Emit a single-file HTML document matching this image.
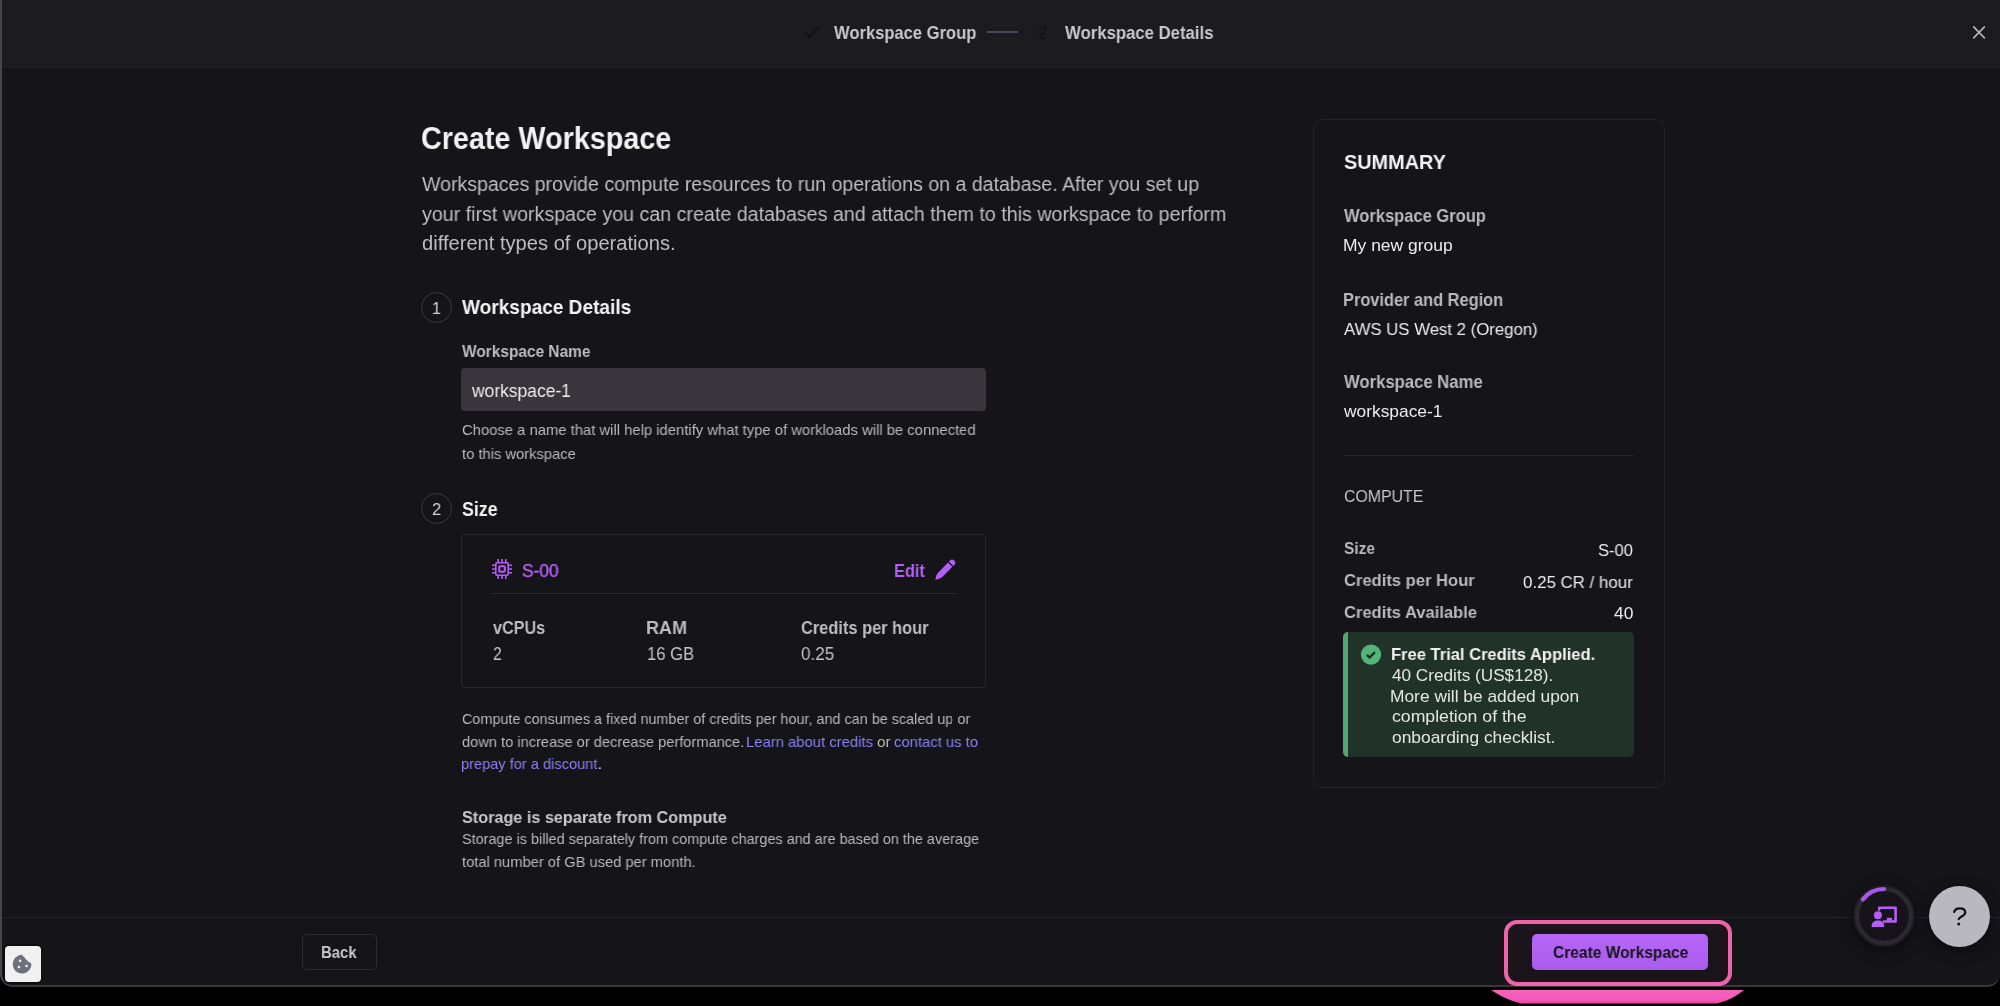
<!DOCTYPE html>
<html><head><meta charset="utf-8">
<style>
*{margin:0;padding:0;box-sizing:border-box;}
html,body{width:2000px;height:1006px;overflow:hidden;background:#000;}
body{font-family:"Liberation Sans",sans-serif;position:relative;}
.a{position:absolute;}
.t{position:absolute;white-space:nowrap;line-height:1;transform-origin:0 0;will-change:transform;}
#frame{position:absolute;left:0;top:0;width:2000px;height:987px;background:#151419;border-left:2px solid #47464b;border-bottom:2px solid #39383d;border-bottom-left-radius:13px;border-bottom-right-radius:13px;overflow:hidden;}
#hdr{position:absolute;left:0;top:0;width:2000px;height:68px;background:#1c1b20;border-bottom:1px solid #222126;}
</style></head>
<body>
<div id="frame">
  <div id="hdr"></div>
</div>

<!-- header icons -->
<svg class="a" style="left:800px;top:22px" width="26" height="20" viewBox="0 0 26 20"><path d="M5 10.5 L9.5 15 L19 5.5" fill="none" stroke="#0f0e12" stroke-width="1.6"/></svg>
<div class="a" style="left:987px;top:31px;width:31px;height:2px;background:#4a4657;"></div>
<svg class="a" style="left:1970px;top:24px" width="18" height="18" viewBox="0 0 18 18"><path d="M3.7 2.9 L14.4 13.8 M14.4 2.9 L3.7 13.8" stroke="#b4b4b6" stroke-width="1.7" stroke-linecap="round"/></svg>

<!-- step circles -->
<div class="a" style="left:420.5px;top:292px;width:31px;height:31px;border:1px solid #3b3a41;border-radius:50%;"></div>
<div class="a" style="left:420.5px;top:493px;width:31px;height:31px;border:1px solid #3b3a41;border-radius:50%;"></div>

<!-- input -->
<div class="a" style="left:461px;top:368px;width:525px;height:43px;background:#38363c;border-radius:4px;"></div>

<!-- size card -->
<div class="a" style="left:461px;top:534px;width:525px;height:154px;border:1px solid #29282e;border-radius:4px;"></div>
<div class="a" style="left:492px;top:593px;width:464px;height:1px;background:#2b2a30;"></div>
<svg class="a" style="left:491px;top:558px" width="22" height="22" viewBox="0 0 22 22">
 <g fill="none" stroke="#b55ef6">
  <rect x="4.8" y="4.8" width="12.4" height="12.4" rx="1.2" stroke-width="1.6"/>
  <rect x="8.2" y="8.2" width="5.6" height="5.6" rx="0.8" stroke-width="2"/>
  <path stroke-width="1.6" d="M7.2 1V4.2 M11 1V4.2 M14.8 1V4.2 M7.2 17.8V21 M11 17.8V21 M14.8 17.8V21 M1 7.2H4.2 M1 11H4.2 M1 14.8H4.2 M17.8 7.2H21 M17.8 11H21 M17.8 14.8H21"/>
 </g>
</svg>
<svg class="a" style="left:934px;top:558px" width="23" height="23" viewBox="0 0 23 23">
 <path d="M16.2 2.2 C17.2 1.2 18.8 1.2 19.8 2.2 L20.6 3 C21.6 4 21.6 5.6 20.6 6.6 L19.3 7.9 L14.9 3.5 Z" fill="#b55ef6"/>
 <path d="M14 4.4 L18.4 8.8 L8.5 18.7 C7.3 19.9 5.4 20.8 3.6 21.2 L1.3 21.7 L1.8 19.4 C2.2 17.6 3.1 15.7 4.3 14.5 Z" fill="#b55ef6"/>
</svg>

<!-- summary card -->
<div class="a" style="left:1313px;top:119px;width:352px;height:669px;border:1px solid #232228;border-radius:9px;"></div>
<div class="a" style="left:1343px;top:455px;width:291px;height:1px;background:#27262b;"></div>
<!-- alert -->
<div class="a" style="left:1343px;top:632px;width:291px;height:125px;background:#213328;border-radius:5px;overflow:hidden;"><div class="a" style="left:0;top:0;width:5px;height:125px;background:#4fa96f;"></div></div>
<svg class="a" style="left:1360px;top:644px" width="22" height="22" viewBox="0 0 22 22"><circle cx="11" cy="10.6" r="10.2" fill="#55b27a"/><path d="M6.9 10.9 L9.6 13.5 L15 8.1" fill="none" stroke="#1d2c22" stroke-width="2.2"/></svg>

<!-- footer -->
<div class="a" style="left:2px;top:917px;width:1998px;height:1px;background:#25242a;"></div>
<div class="a" style="left:302px;top:934px;width:75px;height:36px;border:1px solid #2d2c32;border-radius:5px;"></div>
<!-- highlight -->
<div class="a" style="left:1504px;top:920px;width:228px;height:66px;border:4px solid #ef63ab;border-radius:13px;background:#1b151b;"></div>
<div class="a" style="left:1532px;top:934px;width:176px;height:36px;border-radius:5px;background:linear-gradient(#b566f7,#a95ded);"></div>

<!-- floating buttons -->
<div class="a" style="left:1853px;top:885px;width:62px;height:62px;border-radius:50%;box-shadow:0 4px 14px rgba(0,0,0,0.5);"></div>
<svg class="a" style="left:1853px;top:885px" width="62" height="62" viewBox="0 0 62 62">
 <circle cx="31" cy="31" r="30.2" fill="#16141a" stroke="#221f27" stroke-width="1"/>
 <circle cx="31" cy="31" r="27" fill="none" stroke="#2b2a30" stroke-width="4.4"/>
 <path d="M31 4 A27 27 0 0 0 9.8 14.4" fill="none" stroke="#aa57eb" stroke-width="4.2" stroke-linecap="round"/>
 <path d="M26.2 24.6 V22.7 H42.6 V36.5 H30.8" fill="none" stroke="#b55ef6" stroke-width="2.6" stroke-linejoin="round" stroke-linecap="round"/>
 <g fill="#b55ef6">
  <circle cx="24.9" cy="30.3" r="4"/>
  <path d="M18.7 42.1 V40.6 C18.7 37.4 21.2 35.4 24.95 35.4 C28.7 35.4 31.2 37.4 31.2 40.6 V42.1 Z"/>
  <rect x="33.9" y="32.8" width="5.1" height="3"/>
 </g>
</svg>
<div class="a" style="left:1929px;top:886px;width:61px;height:61px;border-radius:50%;background:#b9b7bf;box-shadow:0 4px 14px rgba(0,0,0,0.5);"></div>
<svg class="a" style="left:1950px;top:906px" width="20" height="22" viewBox="0 0 20 22"><path d="M4.2 5.8 C5 3.2 7.1 2.3 9.8 2.3 C13 2.3 15.2 3.9 15.2 6.4 C15.2 8.6 13.1 9.6 11.2 10.8 C9.6 11.8 8.7 12.3 8.7 13.2" fill="none" stroke="#121116" stroke-width="2.3" stroke-linecap="round"/><circle cx="8.75" cy="18" r="1.5" fill="#121116"/></svg>

<!-- cookie -->
<div class="a" style="left:3px;top:944px;width:39px;height:40px;border-radius:6px;background:#0e0d11;"></div>
<div class="a" style="left:5px;top:946px;width:36px;height:36px;border-radius:4px;background:#f1f1f2;"></div>
<svg class="a" style="left:11px;top:953px" width="22" height="22" viewBox="0 0 22 22">
 <path d="M11.3 1.7 C11.8 2.8 12.4 3.8 13.4 4 C14 5.6 14.8 6.6 16 6.9 C16.6 8.2 17.6 9.2 19.3 9.6 C20.4 10.2 20.6 11.5 20.2 13.2 C19 17.6 15.3 20.6 11 20.6 C6 20.6 1.8 16.6 1.8 11.3 C1.8 6 6 1.7 11.3 1.7 Z" fill="#706f7c"/>
 <g fill="#f1f1f2"><circle cx="9.1" cy="7.9" r="1.3"/><circle cx="7.9" cy="14" r="1.3"/><circle cx="15.5" cy="13" r="1.3"/></g>
</svg>

<!-- pink reflection -->
<svg class="a" style="left:1485px;top:986px" width="270" height="20" viewBox="0 0 270 20">
 <defs><linearGradient id="pg" x1="0" y1="0" x2="0" y2="1"><stop offset="0" stop-color="#f862b6"/><stop offset="0.6" stop-color="#f45cc0"/><stop offset="1" stop-color="#e8469a"/></linearGradient></defs>
 <path d="M6 4 C12 8 22 14 36 17.5 H232 C246 14 254 8 259 4 Z" fill="url(#pg)"/>
</svg>

<div class="t" style="left:834.30px;top:24px;font-size:18.5px;color:#c9c8cd;font-weight:bold;transform:scaleX(0.8950);">Workspace Group</div>
<div class="t" style="left:1065.00px;top:24px;font-size:18.5px;color:#c9c8cd;font-weight:bold;transform:scaleX(0.9043);">Workspace Details</div>
<div class="t" style="left:1038.00px;top:24px;font-size:18px;color:#121116;transform:scaleX(0.9000);">2</div>
<div class="t" style="left:420.99px;top:123px;font-size:31.5px;color:#f2f2f3;font-weight:bold;transform:scaleX(0.9125);">Create Workspace</div>
<div class="t" style="left:422.00px;top:174px;font-size:20px;color:#bebdc2;transform:scaleX(0.9780);">Workspaces provide compute resources to run operations on a database. After you set up</div>
<div class="t" style="left:422.00px;top:204px;font-size:20px;color:#bebdc2;transform:scaleX(0.9831);">your first workspace you can create databases and attach them to this workspace to perform</div>
<div class="t" style="left:422.00px;top:233px;font-size:20px;color:#bebdc2;transform:scaleX(1.0064);">different types of operations.</div>
<div class="t" style="left:431.56px;top:300px;font-size:17px;color:#d4d4d6;transform:scaleX(0.9375);">1</div>
<div class="t" style="left:461.90px;top:297px;font-size:20.8px;color:#f4f4f5;font-weight:bold;transform:scaleX(0.9168);">Workspace Details</div>
<div class="t" style="left:461.90px;top:343px;font-size:17px;color:#bdbcc1;font-weight:bold;transform:scaleX(0.9085);">Workspace Name</div>
<div class="t" style="left:472.00px;top:382px;font-size:18.5px;color:#ececec;transform:scaleX(0.9429);">workspace-1</div>
<div class="t" style="left:461.75px;top:422px;font-size:15px;color:#b9b8bd;transform:scaleX(0.9872);">Choose a name that will help identify what type of workloads will be connected</div>
<div class="t" style="left:461.75px;top:446px;font-size:15px;color:#b9b8bd;transform:scaleX(0.9823);">to this workspace</div>
<div class="t" style="left:431.70px;top:501px;font-size:17px;color:#d4d4d6;transform:scaleX(0.9667);">2</div>
<div class="t" style="left:461.80px;top:499px;font-size:20.6px;color:#f4f4f5;font-weight:bold;transform:scaleX(0.8634);">Size</div>
<div class="t" style="left:521.54px;top:562px;font-size:18px;color:#b55ef6;-webkit-text-stroke:0.4px #b55ef6;transform:scaleX(0.9622);">S-00</div>
<div class="t" style="left:893.70px;top:562px;font-size:18.2px;color:#b55ef6;font-weight:bold;transform:scaleX(0.8971);">Edit</div>
<div class="t" style="left:492.50px;top:619px;font-size:18.8px;color:#bdbcc1;font-weight:bold;transform:scaleX(0.8625);">vCPUs</div>
<div class="t" style="left:646.04px;top:619px;font-size:18.8px;color:#bdbcc1;font-weight:bold;transform:scaleX(0.9573);">RAM</div>
<div class="t" style="left:801.25px;top:619px;font-size:18.8px;color:#bdbcc1;font-weight:bold;transform:scaleX(0.8733);">Credits per hour</div>
<div class="t" style="left:492.50px;top:645px;font-size:18px;color:#c4c3c8;transform:scaleX(0.8750);">2</div>
<div class="t" style="left:646.58px;top:645px;font-size:18px;color:#c4c3c8;transform:scaleX(0.9250);">16 GB</div>
<div class="t" style="left:801.25px;top:645px;font-size:18px;color:#c4c3c8;transform:scaleX(0.9500);">0.25</div>
<div class="t" style="left:461.75px;top:711px;font-size:15px;color:#b9b8bd;transform:scaleX(0.9597);">Compute consumes a fixed number of credits per hour, and can be scaled up or</div>
<div class="t" style="left:461.75px;top:734px;font-size:15px;color:#b9b8bd;transform:scaleX(0.9756);">down to increase or decrease performance.</div>
<div class="t" style="left:745.71px;top:734px;font-size:15px;color:#8e80f2;transform:scaleX(0.9883);">Learn about credits</div>
<div class="t" style="left:876.80px;top:734px;font-size:15px;color:#b9b8bd;transform:scaleX(1.0286);">or</div>
<div class="t" style="left:894.40px;top:734px;font-size:15px;color:#8e80f2;transform:scaleX(0.9882);">contact us to</div>
<div class="t" style="left:460.78px;top:756px;font-size:15px;color:#8e80f2;transform:scaleX(0.9732);">prepay for a discount</div>
<div class="t" style="left:597.45px;top:756px;font-size:15px;color:#b9b8bd;transform:scaleX(1.3500);">.</div>
<div class="t" style="left:461.75px;top:809px;font-size:17px;color:#c9c8cd;font-weight:bold;transform:scaleX(0.9534);">Storage is separate from Compute</div>
<div class="t" style="left:461.75px;top:831px;font-size:15px;color:#b9b8bd;transform:scaleX(0.9614);">Storage is billed separately from compute charges and are based on the average</div>
<div class="t" style="left:461.75px;top:854px;font-size:15px;color:#b9b8bd;transform:scaleX(0.9800);">total number of GB used per month.</div>
<div class="t" style="left:1344.00px;top:152px;font-size:20.6px;color:#f4f4f5;font-weight:bold;transform:scaleX(0.9642);">SUMMARY</div>
<div class="t" style="left:1344.00px;top:208px;font-size:17.9px;color:#bab9be;font-weight:bold;transform:scaleX(0.9227);">Workspace Group</div>
<div class="t" style="left:1342.97px;top:237px;font-size:17px;color:#ececed;transform:scaleX(1.0274);">My new group</div>
<div class="t" style="left:1343.28px;top:292px;font-size:17.9px;color:#bab9be;font-weight:bold;transform:scaleX(0.9156);">Provider and Region</div>
<div class="t" style="left:1344.00px;top:321px;font-size:17px;color:#ececed;transform:scaleX(0.9857);">AWS US West 2 (Oregon)</div>
<div class="t" style="left:1344.00px;top:374px;font-size:17.9px;color:#bab9be;font-weight:bold;transform:scaleX(0.9315);">Workspace Name</div>
<div class="t" style="left:1344.00px;top:403px;font-size:17px;color:#ececed;transform:scaleX(1.0219);">workspace-1</div>
<div class="t" style="left:1344.20px;top:488px;font-size:17px;color:#c8c7cc;transform:scaleX(0.9329);">COMPUTE</div>
<div class="t" style="left:1344.00px;top:540px;font-size:17px;color:#bab9be;font-weight:bold;transform:scaleX(0.9118);">Size</div>
<div class="t" style="left:1598.20px;top:542px;font-size:17px;color:#ececed;transform:scaleX(0.9722);">S-00</div>
<div class="t" style="left:1344.00px;top:572px;font-size:17px;color:#bab9be;font-weight:bold;transform:scaleX(0.9739);">Credits per Hour</div>
<div class="t" style="left:1523.00px;top:574px;font-size:17px;color:#ececed;transform:scaleX(0.9928);">0.25 CR / hour</div>
<div class="t" style="left:1344.00px;top:604px;font-size:17px;color:#bab9be;font-weight:bold;transform:scaleX(0.9730);">Credits Available</div>
<div class="t" style="left:1613.70px;top:605px;font-size:17px;color:#ececed;transform:scaleX(1.0263);">40</div>
<div class="t" style="left:1390.54px;top:646px;font-size:17.3px;color:#f0f0f0;font-weight:bold;transform:scaleX(0.9561);">Free Trial Credits Applied.</div>
<div class="t" style="left:1391.50px;top:667px;font-size:17px;color:#e4e6e4;transform:scaleX(1.0101);">40 Credits (US$128).</div>
<div class="t" style="left:1390.48px;top:688px;font-size:17px;color:#e4e6e4;transform:scaleX(1.0212);">More will be added upon</div>
<div class="t" style="left:1391.50px;top:708px;font-size:17px;color:#e4e6e4;transform:scaleX(1.0388);">completion of the</div>
<div class="t" style="left:1391.50px;top:729px;font-size:17px;color:#e4e6e4;transform:scaleX(1.0233);">onboarding checklist.</div>
<div class="t" style="left:321.12px;top:944px;font-size:17px;color:#c8c8c9;font-weight:bold;transform:scaleX(0.8750);">Back</div>
<div class="t" style="left:1552.50px;top:944px;font-size:16.5px;color:#17151a;font-weight:bold;transform:scaleX(0.9417);">Create Workspace</div>
</body></html>
